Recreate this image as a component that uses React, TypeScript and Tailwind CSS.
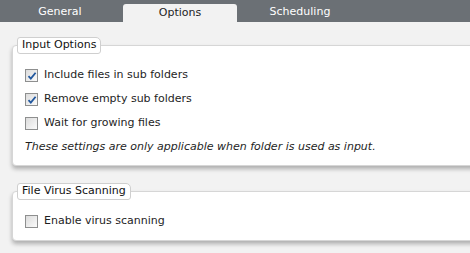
import React from "react";

const font = { fontFamily: '"DejaVu Sans", Verdana, sans-serif' };

function Check({ checked }: { checked?: boolean }) {
  return (
    <div className="relative w-[13px] h-[13px] border border-[#8e8f8f] bg-gradient-to-br from-[#dcdcdc] to-[#fbfbfb] shrink-0">
      {checked && (
        <svg className="absolute left-[1px] top-[1px]" width="10" height="10" viewBox="0 0 10 10">
          <path d="M1.5 5.2 L3.8 7.6 L8.6 1.8" fill="none" stroke="#21579e" strokeWidth="1.8" />
        </svg>
      )}
    </div>
  );
}

function Row({ label, checked }: { label: string; checked?: boolean }) {
  return (
    <div className="flex items-center gap-[6px] h-[24px]">
      <Check checked={checked} />
      <span>{label}</span>
    </div>
  );
}

function Group({ title, children }: { title: string; children: React.ReactNode }) {
  return (
    <div className="flex flex-col">
      <div className="relative z-10 self-start ml-[5px] h-[17px] px-[4px] flex items-center bg-white border border-[#cfcfcf] rounded-[3px] rounded-tr-[5px] text-[#111]">
        {title}
      </div>
      <div className="-mt-[9px] -mr-[20px] bg-white border border-[#d6d6d6] rounded-l-[4px] shadow-[0_3px_4px_rgba(0,0,0,0.28)]">
        {children}
      </div>
    </div>
  );
}

export default function App() {
  return (
    <div className="w-[470px] h-[253px] overflow-hidden bg-[#f2f2f2] text-[11px] text-[#1e1e1e]" style={font}>
      <div className="h-[22px] bg-[#6b7075] flex items-end gap-[6px] pl-[3px]">
        <div className="w-[114px] h-[18px] flex items-center justify-center text-white pb-[2px]">General</div>
        <div className="w-[114px] h-[18px] flex items-center justify-center bg-[#f2f2f2] rounded-t-[3px] text-[#1e1e1e] pt-[1px]">Options</div>
        <div className="w-[114px] h-[18px] flex items-center justify-center text-white pb-[2px]">Scheduling</div>
      </div>
      <div className="flex flex-col gap-[17px] pt-[15px] pl-[12px]">
        <Group title="Input Options">
          <div className="flex flex-col pt-[17px] pl-[12px] pb-[6px]">
            <Row label="Include files in sub folders" checked />
            <Row label="Remove empty sub folders" checked />
            <Row label="Wait for growing files" />
            <div className="italic h-[24px] flex items-center">These settings are only applicable when folder is used as input.</div>
          </div>
        </Group>
        <Group title="File Virus Scanning">
          <div className="flex flex-col pt-[17px] pl-[12px] pb-[7px]">
            <Row label="Enable virus scanning" />
          </div>
        </Group>
      </div>
    </div>
  );
}
